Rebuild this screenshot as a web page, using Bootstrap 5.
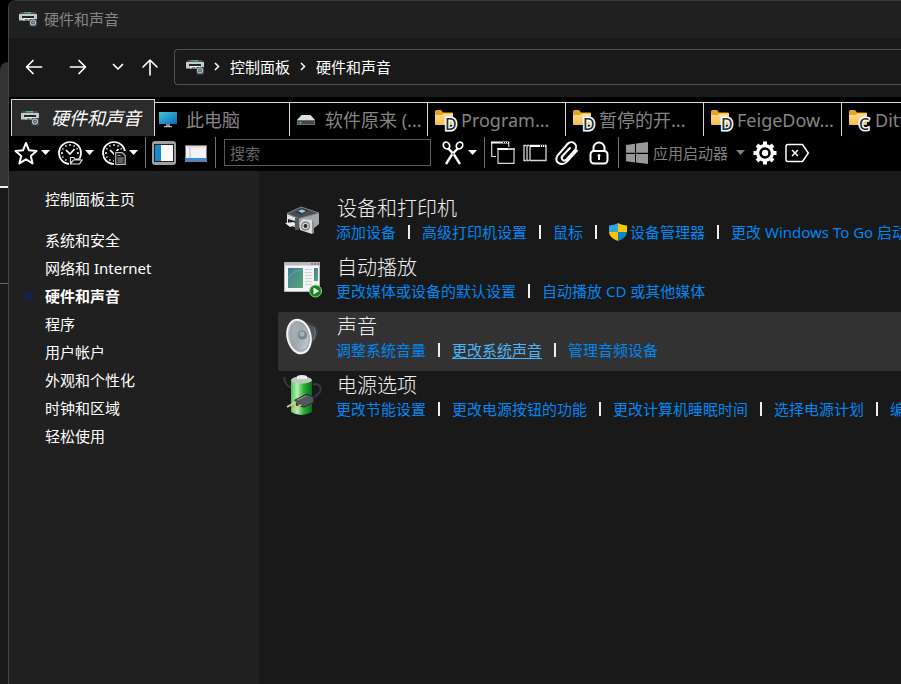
<!DOCTYPE html>
<html lang="zh-CN" data-bs-theme="dark">
<head>
<meta charset="utf-8">
<meta name="viewport" content="width=device-width, initial-scale=1">
<title>硬件和声音</title>
<link href="https://cdn.jsdelivr.net/npm/bootstrap@5.3.0/dist/css/bootstrap.min.css" rel="stylesheet">
<style>
body{background:#000;color:#fff;font-family:"Noto Sans","Noto Sans CJK SC",sans-serif;font-size:15px;line-height:28px}
svg{display:block;flex:none;overflow:visible}
button{background:none;border:0;padding:0;color:inherit}
a{text-decoration:none}
.shell{min-height:100vh}
.backdrop{width:8px;padding-top:62px}
.back-top{height:124px;background:#333;border-top-left-radius:8px}
.back-mid{height:97px;border-top:2px solid #f0f0f0;background:#191919}
.back-low{border-top:1px solid #666;background:#191919}
.win{min-width:0;border-left:1px solid #444;border-top:1px solid #383838;border-top-left-radius:8px;background:#191919;overflow:hidden}
.titlebar{height:37px;padding:0 0 2px 10px;gap:7px;background:#202020;color:#868686}
.navrow{height:59px;padding:0 0 2px 12px}
.navbtn{width:26px;height:32px}
.navbtn.back{margin-right:18px}
.navbtn.forward{margin-right:14px}
.navbtn.recent{margin-right:6px}
.navbtn.up{margin-right:11px}
.address{height:36px;border:1px solid #505050;border-right:0;border-radius:4px 0 0 4px;padding-left:11px;min-width:0}
.address a{color:#fff}
.crumb{margin:0 10px}
.tabstrip{background:#000;padding:2px 0 0 2px}
.tabitem{width:138px;height:34px;border-top:1px solid #d8d8d8;border-right:1px solid #d8d8d8;padding-left:7px;color:#858585;font-size:18px;white-space:nowrap}
.tabitem.second{width:135px;padding-left:3px}
.tabitem.current{width:144px;height:37px;border-left:1px solid #d8d8d8;background:#2b2b2b;color:#fff;font-style:italic;padding-left:9px}
.letter{font-size:16px;font-weight:500;stroke:#fff;stroke-width:3px;paint-order:stroke;fill:#12344a}
.toolstrip{height:35px;background:#000;padding:0 0 2px 5px}
.drop{margin-left:3px}
.rule{width:1px;height:31px;background:#707070;margin:0 6px 0 7px}
.search{width:207px;height:27px;background:#000;border:1px solid #5c5c5c;border-radius:0;padding:0 5px;color:#fff;margin:0 10px 0 2px;outline:0}
.search::placeholder{color:#666;opacity:1}
.launch{color:#808080}
.side{width:250px;background:#202020;padding:14px 0 0 36px}
.side a{color:#fff}
.side .home{margin-bottom:13px}
.side .here{font-weight:700}
.dot{left:-20px;top:11px;width:7px;height:7px;border-radius:50%;background:#121f60}
.content{min-width:0;padding:23px 0 0 19px}
.entry{height:59px;padding-left:5px}
.entry.hot{background:#323232;border-radius:2px 0 0 2px}
.entry h2{font-size:20px;line-height:30px;font-weight:300;color:#f0f0f0;margin:0 0 0 1px}
.tasks{line-height:16px;white-space:nowrap}
.tasks a{color:#0087f0}
.tasks a.over{color:#4cb4f8;text-decoration:underline;text-underline-offset:2px}
.bar{width:2px;height:14px;background:#eee;margin:0 12px;flex:none}
.shield{margin:-2px 3px -2px 0}
.art{width:40px;margin-right:13px}
</style>
<script src="https://cdn.jsdelivr.net/npm/bootstrap@5.3.0/dist/js/bootstrap.bundle.min.js"></script>
</head>
<body>
<svg width="0" height="0" class="position-absolute" aria-hidden="true">
  <defs>
    <linearGradient id="gScreen" x1="0" y1="0" x2="1" y2="1"><stop offset="0" stop-color="#3fc6dc"/><stop offset="1" stop-color="#0c68b8"/></linearGradient>
    <linearGradient id="gFolder" x1="0" y1="0" x2="0" y2="1"><stop offset="0" stop-color="#ffe092"/><stop offset="1" stop-color="#f5bd45"/></linearGradient>
    <linearGradient id="gPic" x1="0" y1="0" x2="1" y2="1"><stop offset="0" stop-color="#3f7c9c"/><stop offset="1" stop-color="#5ba873"/></linearGradient>
    <linearGradient id="gGreen"><stop offset="0" stop-color="#4fc45c"/><stop offset=".3" stop-color="#b4f2b0"/><stop offset=".6" stop-color="#2cb136"/><stop offset="1" stop-color="#0b6a18"/></linearGradient>
    <linearGradient id="gCone" x1="0" y1="0" x2="1" y2="1"><stop offset="0" stop-color="#b4b8bd"/><stop offset=".5" stop-color="#a3a8ad"/><stop offset="1" stop-color="#d7dde4"/></linearGradient>
  </defs>
  <symbol id="printer" viewBox="0 0 18 16">
    <path d="M2 1h14l1.500 2H.500z" fill="#4d5354"/><path d="M5 1.300h4v1H5z" fill="#28c9c9"/><path d="M9 1.300h3v1H9z" fill="#76e264"/>
    <path d="M0 3h18v6.500H0z" fill="#c4cacb"/><path d="M3 5h12v2H3z" fill="#202526"/><path d="M5 7h9l-1 2.500H4z" fill="#f2f4f5"/><path d="M5.500 8.500h4v1h-4z" fill="#202526"/>
    <path d="M10.500 8H18v7.500h-7.500z" fill="#41494e"/><circle cx="14" cy="11.500" r="2.500" fill="none" stroke="#b9c5cd" stroke-width="1.200"/><circle cx="14" cy="11.500" r=".9" fill="#9dbfd4"/>
  </symbol>
  <symbol id="caret" viewBox="0 0 9 5"><path d="M0 0h9L4.500 5z" fill="currentColor"/></symbol>
  <symbol id="folder" viewBox="0 0 22 22">
    <path d="M0 2.500Q0 1 1.500 1H6l2 2.500h9q1 0 1 1V8H0z" fill="#e9a31c"/><path d="M0 6h6.500l2-1.500H18V15q0 1-1 1H1q-1 0-1-1z" fill="url(#gFolder)"/>
  </symbol>
  <symbol id="clock" viewBox="0 0 24 24">
    <circle cx="12" cy="12" r="11" fill="none" stroke="#fff" stroke-width="1.700"/>
    <path d="M12 3v2M12 19v2M3 12h2M19 12h2M7.500 4.200l.8 1.400M16.500 4.200l-.8 1.400M4.200 7.500l1.400.8M19.800 7.500l-1.400.8M4.200 16.500l1.400-.8M7.500 19.800l.8-1.400" stroke="#fff" stroke-width="1.300"/>
    <path d="M8 9l4 4 4.500-5" fill="none" stroke="#fff" stroke-width="1.700"/>
  </symbol>
</svg>
<div class="shell d-flex">
  <div class="backdrop d-flex flex-column flex-shrink-0"><div class="back-top"></div><div class="back-mid"></div><div class="back-low flex-grow-1"></div></div>
  <div class="win d-flex flex-column flex-grow-1">
    <header class="titlebar d-flex align-items-center"><svg width="18" height="16"><use href="#printer"/></svg><span>硬件和声音</span></header>
    <nav class="navrow d-flex align-items-center" aria-label="导航">
      <button class="navbtn back d-flex align-items-center justify-content-center" aria-label="后退"><svg width="18" height="18" viewBox="0 0 18 18" fill="none" stroke="#fff" stroke-width="1.700" stroke-linecap="round" stroke-linejoin="round"><path d="M16.500 9H2M8 2.500L1.500 9 8 15.500"/></svg></button>
      <button class="navbtn forward d-flex align-items-center justify-content-center" aria-label="前进"><svg width="18" height="18" viewBox="0 0 18 18" fill="none" stroke="#fff" stroke-width="1.700" stroke-linecap="round" stroke-linejoin="round"><path d="M1.500 9H16M10 2.500L16.500 9 10 15.500"/></svg></button>
      <button class="navbtn recent d-flex align-items-center justify-content-center" aria-label="最近的位置"><svg width="12" height="8" viewBox="0 0 12 8" fill="none" stroke="#fff" stroke-width="1.700" stroke-linecap="round" stroke-linejoin="round"><path d="M1.500 1.500L6 6l4.500-4.500"/></svg></button>
      <button class="navbtn up d-flex align-items-center justify-content-center" aria-label="向上"><svg width="18" height="18" viewBox="0 0 18 18" fill="none" stroke="#fff" stroke-width="1.600" stroke-linecap="round" stroke-linejoin="round"><path d="M9 17V2M2 9l7-7 7 7"/></svg></button>
      <div class="address d-flex align-items-center flex-grow-1">
        <svg width="18" height="16"><use href="#printer"/></svg>
        <svg class="crumb" width="6" height="9" viewBox="0 0 6 9" fill="none" stroke="#fff" stroke-width="1.500"><path d="M1 1l3.500 3.500L1 8"/></svg>
        <a href="#">控制面板</a>
        <svg class="crumb" width="6" height="9" viewBox="0 0 6 9" fill="none" stroke="#fff" stroke-width="1.500"><path d="M1 1l3.500 3.500L1 8"/></svg>
        <a href="#">硬件和声音</a>
      </div>
    </nav>
    <div class="tabstrip d-flex align-items-end overflow-hidden">
      <button class="tabitem current d-flex align-items-center flex-shrink-0"><svg width="18" height="16" class="me-2"><use href="#printer"/></svg><span class="ms-1">硬件和声音</span></button>
      <button class="tabitem second d-flex align-items-center flex-shrink-0"><svg width="20" height="18" viewBox="0 0 20 18" class="me-2"><path d="M1 1h18v12H1z" fill="url(#gScreen)"/><path d="M8 13h4v2H8z" fill="#7c8890"/><path d="M6 15h8v1.300H6z" fill="#b7c0c6"/></svg><span>此电脑</span></button>
      <button class="tabitem d-flex align-items-center flex-shrink-0"><svg width="20" height="18" viewBox="0 0 20 18" class="me-2"><path d="M4.500 4h9L18 9H0z" fill="#dedede"/><path d="M0 9h18v5H0z" fill="#6b6e70"/><path d="M1 10h16v3H1z" fill="#414546"/><path d="M2.500 11h2v1.500h-2z" fill="#56e34d"/></svg><span>软件原来 (...</span></button>
      <button class="tabitem d-flex align-items-center flex-shrink-0"><svg width="22" height="22" class="me-1"><use href="#folder"/><text x="10" y="21" class="letter">D</text></svg><span>Program...</span></button>
      <button class="tabitem d-flex align-items-center flex-shrink-0"><svg width="22" height="22" class="me-1"><use href="#folder"/><text x="10" y="21" class="letter">D</text></svg><span>暂停的开...</span></button>
      <button class="tabitem d-flex align-items-center flex-shrink-0"><svg width="22" height="22" class="me-1"><use href="#folder"/><text x="10" y="21" class="letter">D</text></svg><span>FeigeDow...</span></button>
      <button class="tabitem d-flex align-items-center flex-shrink-0"><svg width="22" height="22" class="me-1"><use href="#folder"/><text x="10" y="21" class="letter">C</text></svg><span>Ditto</span></button>
    </div>
    <div class="toolstrip d-flex align-items-center" role="toolbar">
      <div class="d-flex gap-2">
        <button class="d-flex align-items-center" aria-label="收藏夹"><svg width="24" height="24" viewBox="0 0 24 24"><path d="M12 2l3 7.300 7.500.6-5.700 5 1.800 7.500L12 18.300l-6.600 4.100 1.800-7.500-5.700-5L9 9.300z" fill="none" stroke="#fff" stroke-width="2" stroke-linejoin="round"/></svg><svg width="9" height="5" class="drop"><use href="#caret"/></svg></button>
        <button class="d-flex align-items-center" aria-label="最近的文件夹"><svg width="24" height="24" viewBox="0 0 24 24"><use href="#clock"/><path d="M11 24v-8h4l1.500 1.500H24V24z" fill="#000"/><path d="M12.500 22v-5.500H16l1 1.500h5v1.500M12.500 22.500l3-3.500H24l-2.500 4h-9z" fill="#000" stroke="#ddd" stroke-width="1.200"/></svg><svg width="9" height="5" class="drop"><use href="#caret"/></svg></button>
        <button class="d-flex align-items-center" aria-label="最近的文件"><svg width="24" height="24" viewBox="0 0 24 24"><use href="#clock"/><path d="M12 10h12v14H12z" fill="#000"/><path d="M13.700 11.600h6.500l3 3v8.700h-9.500z" fill="#111" stroke="#bbb" stroke-width="1.200"/><path d="M15.500 14.500h3M15.500 17h6M15.500 19h6M15.500 21h6" stroke="#aaa"/></svg><svg width="9" height="5" class="drop"><use href="#caret"/></svg></button>
      </div>
      <div class="rule"></div>
      <div class="d-flex gap-2">
        <button aria-label="导航窗格"><svg width="24" height="24" viewBox="0 0 24 24"><rect width="24" height="24" rx="3" fill="#a0a0a0"/><path d="M2 3h20v18H2z" fill="#222"/><path d="M3 4h6v16H3z" fill="#1688cf"/><path d="M9 4h12v16H9z" fill="#fafafa"/></svg></button>
        <button aria-label="预览窗格"><svg width="24" height="24" viewBox="0 0 24 24"><path d="M1 4h22v17H1z" fill="#77797b"/><path d="M2 5h20v12H2z" fill="#f2f2f2"/><path d="M6 6v11" stroke="#bbb"/><path d="M2 17h20v3H2z" fill="#3c8ae0"/><path d="M3 6h18" stroke="#ccc"/></svg></button>
      </div>
      <div class="rule"></div>
      <input class="search" type="text" placeholder="搜索" aria-label="搜索">
      <button class="d-flex align-items-center" aria-label="剪切"><svg width="24" height="24" viewBox="0 0 24 24" fill="none" stroke="#fff"><ellipse cx="5.500" cy="4.500" rx="3" ry="3.600" stroke-width="1.700" transform="rotate(-35 5.500 4.500)"/><ellipse cx="18.500" cy="4.500" rx="3" ry="3.600" stroke-width="1.700" transform="rotate(35 18.500 4.500)"/><path d="M7.300 7.500L13 13.500l6 9.500M16.700 7.500L11 13.500 5 23" stroke-width="2.400"/><circle cx="12" cy="13" r=".8" fill="#000" stroke="none"/></svg><svg width="9" height="5" class="drop"><use href="#caret"/></svg></button>
      <div class="rule"></div>
      <div class="d-flex gap-2">
        <button aria-label="复制窗口"><svg width="24" height="24" viewBox="0 0 24 24" fill="none" stroke="#d8d8d8" stroke-width="1.200"><path d="M5 15.500H.700V1.500h17V6M7 7.500h16v14.800H7z"/><path d="M0 1.500h18M6.500 8h17" stroke="#fff" stroke-width="2"/><path d="M12 1.500h5M17.500 8h5" stroke="#000" stroke-dasharray="1 1"/></svg></button>
        <button aria-label="窗口列表"><svg width="24" height="24" viewBox="0 0 24 24" fill="none" stroke="#d8d8d8" stroke-width="1.300"><path d="M3 4.500H1v15h2M6 4.500H4v15h2M7 4.500h16v15H7z"/><path d="M7 5h16" stroke="#fff" stroke-width="2"/><path d="M17 5h5" stroke="#000" stroke-dasharray="1 1"/></svg></button>
        <button aria-label="附件"><svg width="24" height="24" viewBox="0 0 24 24" fill="none" stroke="#fff" stroke-width="2" stroke-linecap="round"><path d="M22 9.500L12 20.500c-2 2.500-5 3-7.500 2-3.500-1-4-5-2-8L12.500 3c2-2.200 5-2.200 7-.5s2 4.500.5 6.500l-8.500 9.500c-1.300 1.300-3 1.200-4 .2s-1-2.500 0-3.700l7.500-8"/></svg></button>
        <button aria-label="锁定"><svg width="24" height="24" viewBox="0 0 24 24" fill="none" stroke="#fff" stroke-width="2"><rect x="3.500" y="10" width="17" height="12.500" rx="3.500"/><path d="M6.500 10V7a5.500 5.500 0 0 1 11 0v3"/><path d="M12 14.500V19" stroke-width="2"/><circle cx="12" cy="14.500" r="1" fill="#fff" stroke-width="1"/></svg></button>
      </div>
      <div class="rule"></div>
      <div class="d-flex gap-2">
        <button class="launch d-flex align-items-center"><svg width="24" height="24" viewBox="0 0 24 24" fill="#989898"><path d="M1 4l9-1.200v9H1zM11 2.600L23 1v10.800H11zM1 13h9v8.500L1 20.300zM11 13h12v10l-12-1.500z"/></svg><span class="ms-1 me-2">应用启动器</span><svg width="9" height="5"><use href="#caret"/></svg></button>
        <button aria-label="选项"><svg width="24" height="24" viewBox="0 0 24 24"><circle cx="12" cy="12" r="7.400" fill="none" stroke="#fff" stroke-width="3.200"/><path d="M12 .5v4M12 19.500v4M.5 12h4M19.500 12h4M4 4l2.500 2.500M17.500 17.500L20 20M4 20l2.500-2.500M17.500 6.500L20 4" stroke="#fff" stroke-width="4"/><circle cx="12" cy="12" r="3.200" fill="#fff"/></svg></button>
        <button aria-label="关闭标签"><svg width="24" height="24" viewBox="0 0 24 24" fill="none" stroke="#fff" stroke-width="1.500" stroke-linejoin="round"><path d="M3 3.500h14.500L23.300 12l-5.800 8.500H3q-2 0-2-2v-13q0-2 2-2z"/><path d="M7 9l6 6M13 9l-6 6"/></svg></button>
      </div>
    </div>
    <div class="d-flex flex-grow-1">
      <aside class="side flex-shrink-0">
        <div class="home"><a href="#">控制面板主页</a></div>
        <ul class="list-unstyled mb-0">
          <li><a href="#">系统和安全</a></li>
          <li><a href="#">网络和 Internet</a></li>
          <li class="here position-relative"><span class="dot position-absolute"></span><a href="#" aria-current="page">硬件和声音</a></li>
          <li><a href="#">程序</a></li>
          <li><a href="#">用户帐户</a></li>
          <li><a href="#">外观和个性化</a></li>
          <li><a href="#">时钟和区域</a></li>
          <li><a href="#">轻松使用</a></li>
        </ul>
      </aside>
      <main class="content flex-grow-1 overflow-hidden">
        <section class="entry d-flex">
          <svg class="art" height="56" viewBox="0 0 40 56"><path d="M4 20v10l10 4V24z" fill="#dedfe0"/><path d="M14 24l22-5v11l-6 5-16-1z" fill="#a4a7a9"/><path d="M4 19.500L18 13l18 6-20 5.500z" fill="#484d50" stroke="#7d8386"/><path d="M12 18l8-3.500 6 2-8 4z" fill="#2e3a40"/><path d="M15 17l4-1.500 4 1.500-4 2z" fill="#8ed4ec"/><path d="M5 25l7 2v5l-7-2z" fill="#222"/><path d="M2 29l9-1 2 3-6 2z" fill="#e9ecee"/><path d="M12 24h4v12h-4z" fill="#565b5e"/><path d="M17 29l3-4 9 1v14l-12-4z" fill="#d8dadc"/><path d="M29 26l2 2v11l-2 1z" fill="#8c8c8c"/><circle cx="22.500" cy="32" r="4.500" fill="#777"/><circle cx="22.500" cy="32" r="3.300" fill="#d0d5d8"/><circle cx="22.500" cy="32" r="1.900" fill="#202b33"/></svg>
          <div><h2>设备和打印机</h2><div class="tasks d-flex align-items-center"><a href="#">添加设备</a><span class="bar"></span><a href="#">高级打印机设置</a><span class="bar"></span><a href="#">鼠标</a><span class="bar"></span><a href="#" class="d-flex align-items-center"><svg width="18" height="20" viewBox="0 0 18 20" class="shield"><path d="M9 1C6.500 2.500 3 3.500 0 3.500V10h9z" fill="#2fa6e5"/><path d="M9 1c2.500 1.500 6 2.500 9 2.500V10H9z" fill="#f9c900"/><path d="M0 10c.3 4 4 7.500 9 9v-9z" fill="#f7c400"/><path d="M18 10c-.3 4-4 7.500-9 9v-9z" fill="#0b83cf"/></svg><span>设备管理器</span></a><span class="bar"></span><a href="#">更改 Windows To Go 启动选项</a></div></div>
        </section>
        <section class="entry d-flex">
          <svg class="art" height="56" viewBox="0 0 40 56"><path d="M1.500 9.500h35v29h-35z" fill="#f4f4f4" stroke="#b5b5b5"/><path d="M2 10h34v2.500H2z" fill="#b6bcc0"/><path d="M28 11h8" stroke="#555" stroke-dasharray="2 1"/><path d="M5 15h15v20H5z" fill="url(#gPic)"/><path d="M5 25q6-8 15-8" stroke="#65a7af" fill="none"/><path d="M22 16.500h7M22 19.500h7M22 22.500h7M22 25.500h7M22 28.500h7M22 31.500h7" stroke="#d0d0d0"/><path d="M31 15h4v13h-4z" fill="url(#gPic)"/><circle cx="32.500" cy="38" r="6" fill="#148421" stroke="#a0cf98"/><path d="M30.500 34.500l5.500 3.500-5.500 3.500z" fill="#fff"/></svg>
          <div><h2>自动播放</h2><div class="tasks d-flex align-items-center"><a href="#">更改媒体或设备的默认设置</a><span class="bar"></span><a href="#">自动播放 CD 或其他媒体</a></div></div>
        </section>
        <section class="entry hot d-flex">
          <svg class="art" height="56" viewBox="0 0 40 56"><path d="M19 10q12-1 16 8 1 9-7 14l-8 5z" fill="#3c4043"/><path d="M26 13q6 1 7 8-1 7-6 11l-3-8z" fill="#50565a"/><path d="M31 15q3 7-1 13" stroke="#777" fill="none"/><ellipse cx="16" cy="24.500" rx="11.500" ry="17" transform="rotate(-12 16 24.500)" fill="url(#gCone)" stroke="#f4f4f4" stroke-width="2"/><ellipse cx="17" cy="24.500" rx="9" ry="14" transform="rotate(-12 17 24.500)" fill="none" stroke="#9aa0a6"/><circle cx="19.500" cy="23" r="4.500" fill="#75858e"/><circle cx="19" cy="22" r="2.500" fill="#a6b3bc"/></svg>
          <div><h2>声音</h2><div class="tasks d-flex align-items-center"><a href="#">调整系统音量</a><span class="bar"></span><a href="#" class="over">更改系统声音</a><span class="bar"></span><a href="#">管理音频设备</a></div></div>
        </section>
        <section class="entry d-flex">
          <svg class="art" height="56" viewBox="0 0 40 56"><path d="M1 6q1 9 8 11M30 13q10 0 7 8-4 5-9 7" fill="none" stroke="#35384f" stroke-width="2"/><path d="M8 9v32q10 6 21 0V9z" fill="url(#gGreen)"/><ellipse cx="18.500" cy="9" rx="10.500" ry="3.700" fill="#bccabd"/><path d="M14 5q5-2 10 0v3H14z" fill="#e9eeea"/><path d="M12 29l12-6 6 3 1 5-9 5-8-1z" fill="#54565d" stroke="#242730"/><path d="M13 31l-9 5M18 34l-8 5" stroke="#e8c58d" stroke-width="2"/><path d="M14 29l9-4" stroke="#9a9ca3"/></svg>
          <div><h2>电源选项</h2><div class="tasks d-flex align-items-center"><a href="#">更改节能设置</a><span class="bar"></span><a href="#">更改电源按钮的功能</a><span class="bar"></span><a href="#">更改计算机睡眠时间</a><span class="bar"></span><a href="#">选择电源计划</a><span class="bar"></span><a href="#">编辑电源计划</a></div></div>
        </section>
      </main>
    </div>
  </div>
</div>
</body>
</html>
